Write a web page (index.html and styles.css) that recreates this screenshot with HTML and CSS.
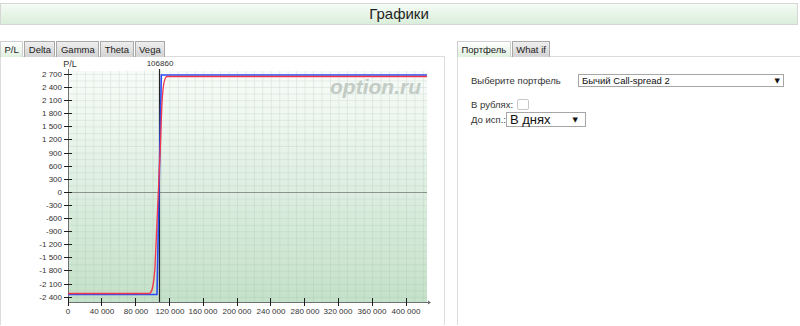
FILE: index.html
```html
<!DOCTYPE html>
<html lang="ru">
  <head>
    <meta charset="UTF-8" />
    <meta name="viewport" content="width=device-width, initial-scale=1.0" />
    <title>Графики</title>
    <link rel="stylesheet" href="styles.css">
  </head>
  <body>
    <header class="title-bar">Графики</header>

    <div class="panels">
      <section class="panel chart-panel">
        <ul class="tabs">
          <li class="tab active">P/L</li>
          <li class="tab">Delta</li>
          <li class="tab">Gamma</li>
          <li class="tab">Theta</li>
          <li class="tab">Vega</li>
        </ul>
        <div class="panel-body">
          <svg class="chart" width="443" height="268" viewBox="1 58 443 268">
            <defs>
              <linearGradient id="plot-bg" x1="0" y1="0" x2="0" y2="1">
                <stop offset="0" stop-color="#f8fcf9" />
                <stop offset="1" stop-color="#c4e1c9" />
              </linearGradient>
              <pattern id="grid" x="68" y="193" width="8.45" height="6.56" patternUnits="userSpaceOnUse">
                <path d="M0 0 H8.45 M0 0 V6.56" stroke="#9fb8a6" stroke-opacity="0.45" stroke-width="1" fill="none" />
              </pattern>
            </defs>

            <rect x="68" y="72" width="359" height="231" fill="url(#plot-bg)" />
            <rect x="68" y="72" width="359" height="231" fill="url(#grid)" />

            <text class="watermark" x="330" y="95">option.ru</text>

            <!-- zero line -->
            <line x1="68" y1="193.5" x2="427" y2="193.5" stroke="#8a948c" />

            <!-- axes -->
            <line x1="68.5" y1="70" x2="68.5" y2="303" stroke="#707070" />
            <line x1="68" y1="303.5" x2="428" y2="303.5" stroke="#707070" />
            <path d="M428 301.5 L431 303.5 L428 305.5 Z" fill="#707070" />

            <g class="ticks">
              <path d="M64 75.5 H72 M64 88.5 H72 M64 101.5 H72 M64 114.5 H72 M64 127.5 H72 M64 140.5 H72 M64 154.5 H72 M64 167.5 H72 M64 180.5 H72 M64 193.5 H72 M64 206.5 H72 M64 219.5 H72 M64 232.5 H72 M64 245.5 H72 M64 258.5 H72 M64 271.5 H72 M64 285.5 H72 M64 298.5 H72" />
              <path d="M68.5 299 V307 M101.5 299 V307 M135.5 299 V307 M169.5 299 V307 M203.5 299 V307 M237.5 299 V307 M270.5 299 V307 M304.5 299 V307 M338.5 299 V307 M372.5 299 V307 M406.5 299 V307" />
            </g>

            <g class="y-labels">
              <text x="62" y="78">2 700</text>
              <text x="62" y="91">2 400</text>
              <text x="62" y="104">2 100</text>
              <text x="62" y="117">1 800</text>
              <text x="62" y="130">1 500</text>
              <text x="62" y="143">1 200</text>
              <text x="62" y="157">900</text>
              <text x="62" y="170">600</text>
              <text x="62" y="183">300</text>
              <text x="62" y="196">0</text>
              <text x="62" y="209">-300</text>
              <text x="62" y="222">-600</text>
              <text x="62" y="235">-900</text>
              <text x="62" y="248">-1 200</text>
              <text x="62" y="261">-1 500</text>
              <text x="62" y="274">-1 800</text>
              <text x="62" y="288">-2 100</text>
              <text x="62" y="301">-2 400</text>
            </g>

            <g class="x-labels">
              <text x="68" y="315">0</text>
              <text x="102" y="315">40 000</text>
              <text x="136" y="315">80 000</text>
              <text x="170" y="315">120 000</text>
              <text x="203" y="315">160 000</text>
              <text x="237" y="315">200 000</text>
              <text x="271" y="315">240 000</text>
              <text x="305" y="315">280 000</text>
              <text x="338" y="315">320 000</text>
              <text x="372" y="315">360 000</text>
              <text x="406" y="315">400 000</text>
            </g>

            <text class="axis-title" x="70" y="68">P/L</text>

            <!-- current price -->
            <line x1="159.5" y1="70" x2="159.5" y2="303" stroke="#262626" stroke-width="1.2" />
            <text class="price-label" x="160" y="67">106860</text>

            <!-- expiry and today curves -->
            <path d="M68 295.5 H157 L161.3 76 H427" stroke="#2b4cf5" stroke-width="1.6" fill="none" />
            <path d="M68 294.5 H149 C152 294.5 153.5 288 155 268 L160.7 140 C161.8 100 162.8 78 167 77.5 H427" stroke="#f2354a" stroke-width="1.3" fill="none" />
          </svg>
        </div>
      </section>

      <section class="panel portfolio-panel">
        <ul class="tabs">
          <li class="tab active">Портфель</li>
          <li class="tab">What if</li>
        </ul>
        <div class="panel-body form">
          <div class="form-row">
            <span class="label wide">Выберите портфель</span>
            <div class="select portfolio-select">
              <span>Бычий Call-spread 2</span>
              <span class="arrow">▼</span>
            </div>
          </div>
          <div class="form-row rub-row">
            <span class="label">В рублях:</span>
            <span class="checkbox"></span>
          </div>
          <div class="form-row expiry-row">
            <span class="label">До исп.:</span>
            <div class="select days-select">
              <span>В днях</span>
              <span class="arrow">▼</span>
            </div>
          </div>
        </div>
      </section>
    </div>
  </body>
</html>
```

FILE: styles.css
```css
body {
  margin: 0;
  background: #fff;
  color: #222;
  font-family: "Liberation Sans", Arial, sans-serif;
  overflow: hidden;
}

.title-bar {
  margin: 3px 2px 0 0;
  height: 20px;
  line-height: 20px;
  border: 1px solid #d6d6d6;
  background: linear-gradient(#f5fbf5, #daeeda);
  text-align: center;
  font-size: 15px;
  color: #1f1f1f;
}

.panels {
  display: flex;
  gap: 12px;
  height: 284px;
  margin-top: 16px;
  overflow: hidden;
}

.panel {
  flex: none;
}

.chart-panel {
  width: 445px;
}

.portfolio-panel {
  width: 345px;
}

.tabs {
  display: flex;
  gap: 1px;
  list-style: none;
  margin: 0 0 -1px 0;
  padding: 0;
  position: relative;
}

.tab {
  height: 15px;
  line-height: 15px;
  padding: 0 3.5px;
  border: 1px solid #a9a9a9;
  border-bottom: none;
  background: linear-gradient(#eeeeee, #d3d3d3);
  font-size: 9.5px;
  color: #222;
}

.tab.active {
  border-color: #cfcfcf;
  background: linear-gradient(#ffffff, #dff0df);
}

.panel-body {
  border: 1px solid #dcdcdc;
  height: 270px;
}

.chart {
  display: block;
}

.ticks path {
  stroke: #1e1e1e;
  stroke-width: 1;
}

.y-labels text,
.x-labels text {
  font-size: 8px;
  fill: #333;
}

.y-labels text {
  text-anchor: end;
}

.x-labels text {
  text-anchor: middle;
}

.axis-title {
  font-size: 9px;
  fill: #333;
  text-anchor: middle;
}

.price-label {
  font-size: 8px;
  fill: #333;
  text-anchor: middle;
}

.watermark {
  font-size: 21px;
  font-weight: bold;
  font-style: italic;
  fill: #c3cbc5;
}

.form {
  padding: 17px 13px;
  font-size: 9.5px;
  color: #333;
}

.form-row {
  display: flex;
  align-items: center;
}

.label.wide {
  width: 107px;
}

.select {
  display: flex;
  align-items: center;
  justify-content: space-between;
  box-sizing: border-box;
  border: 1px solid #a6a6a6;
  background: #fff;
  color: #111;
}

.portfolio-select {
  width: 206px;
  height: 13px;
  padding: 0 3px;
}

.arrow {
  font-family: "DejaVu Sans", sans-serif;
  font-size: 7px;
}

.rub-row {
  margin-top: 12px;
}

.checkbox {
  width: 10px;
  height: 9px;
  margin-left: 4px;
  border: 1px solid #c8c8c8;
  border-radius: 2px;
}

.expiry-row {
  margin-top: 2px;
}

.days-select {
  width: 80px;
  height: 15px;
  margin-left: 0;
  padding: 0 7px 0 3px;
  font-size: 13px;
}
```
